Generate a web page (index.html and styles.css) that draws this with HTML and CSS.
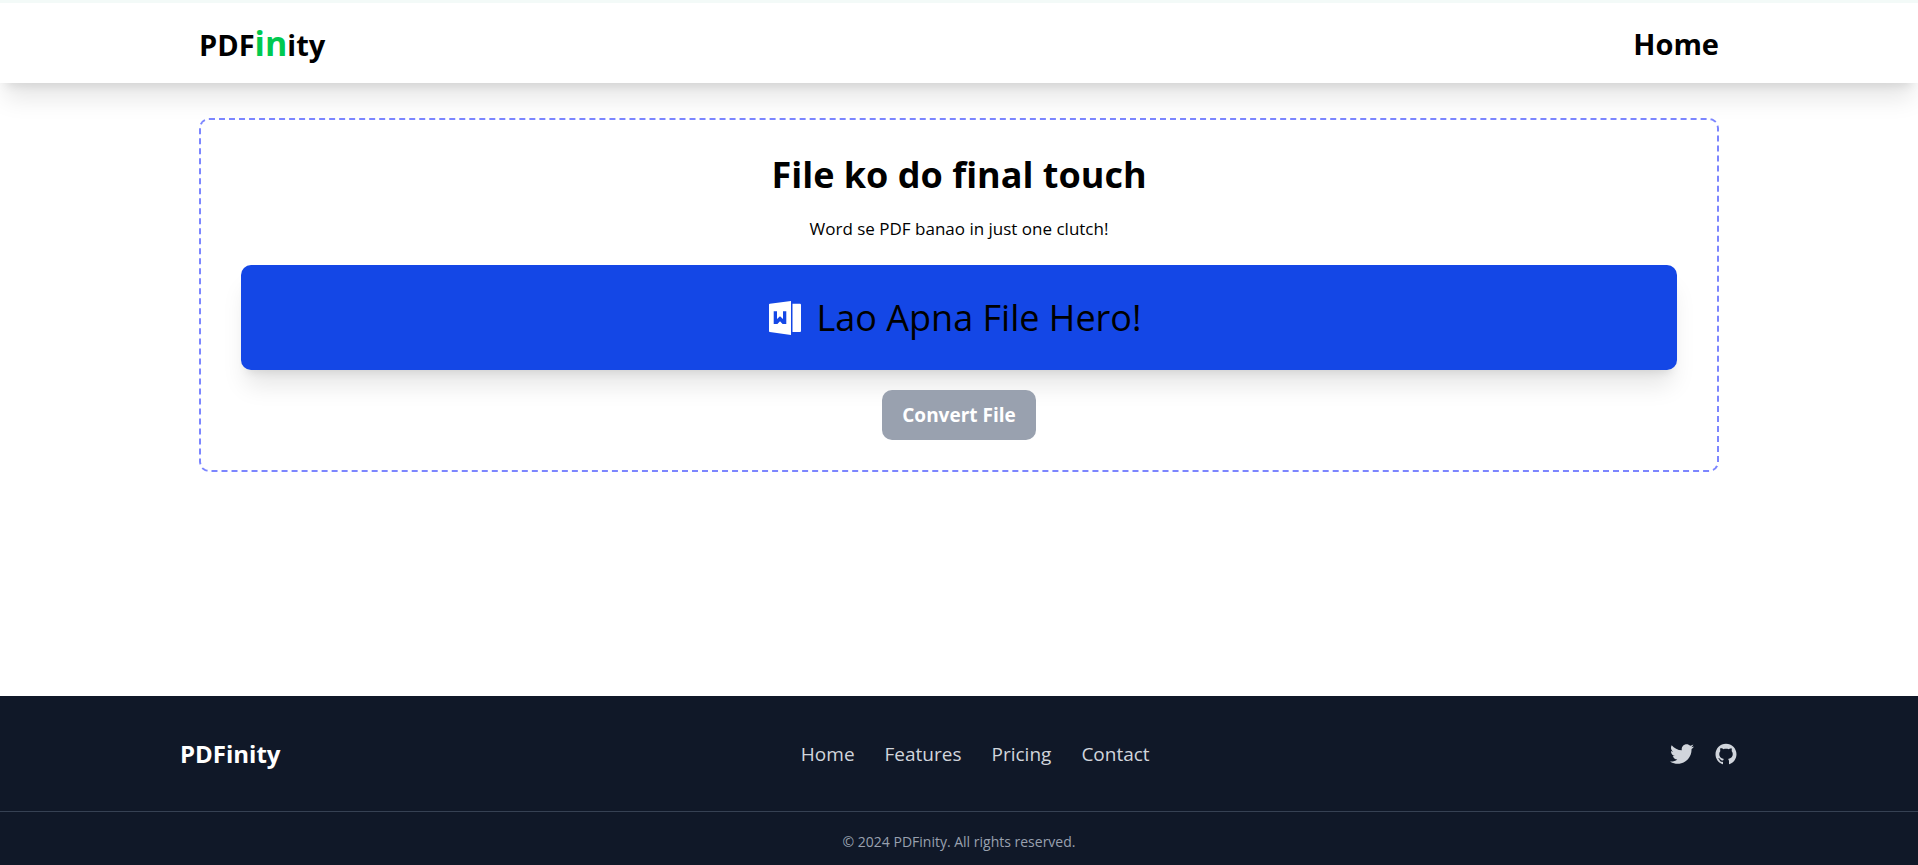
FILE: index.html
```html
<!DOCTYPE html>
<html lang="en">
<head>
<meta charset="utf-8">
<meta name="viewport" content="width=device-width, initial-scale=1">
<title>PDFinity</title>
<link rel="stylesheet" href="styles.css">
</head>
<body>
<header class="site-header">
  <div class="header-inner">
    <a class="brand" href="#">PDF<span class="brand-accent">in</span>ity</a>
    <nav><a class="header-link" href="#">Home</a></nav>
  </div>
</header>
<main class="main">
  <section class="card">
    <h1 class="title">File ko do final touch</h1>
    <p class="subtitle">Word se PDF banao in just one clutch!</p>
    <button class="picker" type="button">
      <svg class="picker-icon" viewBox="0 0 32 34" aria-hidden="true">
        <path fill="#fff" fill-rule="evenodd" d="M0 3.5 Q0 2.8 .8 2.7 L22 0 V34 L.8 31.1 Q0 31 0 30.3 Z M4.7 10.3 V23 H8.4 L11 20.3 L13.6 23 H17.3 V10.3 H14 V18 L11 15.3 L8 18 V10.3 Z"/>
        <path fill="#fff" d="M23.5 2.7 H31 Q32 2.7 32 3.7 V30 Q32 31 31 31 H23.5 Z"/>
      </svg>
      <span>Lao Apna File Hero!</span>
    </button>
    <button class="convert" type="button">Convert File</button>
  </section>
</main>
<footer class="site-footer">
  <div class="footer-inner">
    <h2 class="footer-brand">PDFinity</h2>
    <nav class="footer-nav">
      <a href="#">Home</a>
      <a href="#">Features</a>
      <a href="#">Pricing</a>
      <a href="#">Contact</a>
    </nav>
    <div class="social">
      <a href="#" aria-label="Twitter"><svg class="social-icon" viewBox="0 0 512 512"><path d="M459.37 151.716c.325 4.548.325 9.097.325 13.645 0 138.72-105.583 298.558-298.558 298.558-59.452 0-114.68-17.219-161.137-47.106 8.447.974 16.568 1.299 25.34 1.299 49.055 0 94.213-16.568 130.274-44.832-46.132-.975-84.792-31.188-98.112-72.772 6.498.974 12.995 1.624 19.818 1.624 9.421 0 18.843-1.3 27.614-3.573-48.081-9.747-84.143-51.98-84.143-102.985v-1.299c13.969 7.797 30.214 12.67 47.431 13.319-28.264-18.843-46.781-51.005-46.781-87.391 0-19.492 5.197-37.36 14.294-52.954 51.655 63.675 129.3 105.258 216.365 109.807-1.624-7.797-2.599-15.918-2.599-24.04 0-57.828 46.782-104.934 104.934-104.934 30.213 0 57.502 12.67 76.67 33.137 23.715-4.548 46.456-13.32 66.599-25.34-7.798 24.366-24.366 44.833-46.132 57.827 21.117-2.273 41.584-8.122 60.426-16.243-14.292 20.791-32.161 39.308-52.628 54.253z"/></svg></a>
      <a href="#" aria-label="GitHub"><svg class="social-icon" viewBox="0 0 1024 1024"><path d="M511.6 76.3C264.3 76.2 64 276.4 64 523.5 64 718.9 189.3 885 363.8 946c23.5 5.9 19.9-10.8 19.9-22.2v-77.5c-135.7 15.9-141.2-73.9-150.3-88.9C215 726 171.5 718 184.5 703c30.9-15.9 62.4 4 98.9 57.9 26.4 39.1 77.9 32.5 104 26 5.7-23.5 17.9-44.5 34.7-60.8-140.6-25.2-199.2-111-199.2-213 0-49.5 16.3-95 48.3-131.7-20.4-60.5 1.9-112.3 4.9-120 58.1-5.2 118.5 41.6 123.2 45.3 33-8.9 70.7-13.6 112.9-13.6 42.4 0 80.2 4.9 113.5 13.9 11.3-8.6 67.3-48.8 121.3-43.9 2.9 7.7 24.7 58.3 5.5 118 32.4 36.8 48.9 82.7 48.9 132.3 0 102.2-59 188.1-200 212.9a127.5 127.5 0 0138.1 91v112.5c.8 9 0 17.9 15 17.9 177.1-59.7 304.6-227 304.6-424.1 0-247.2-200.4-447.3-447.5-447.3z"/></svg></a>
    </div>
  </div>
  <p class="copyright">© 2024 PDFinity. All rights reserved.</p>
</footer>
</body>
</html>
```
FILE: styles.css
```css
* { box-sizing: border-box; margin: 0; padding: 0; }

body {
  min-height: 100vh;
  display: flex;
  flex-direction: column;
  border-top: 3px solid #f3faf8;
  background: #fff;
  color: #000;
  font-family: "Segoe UI", "Open Sans", "Noto Sans", sans-serif;
}

a { color: inherit; text-decoration: none; }
button { border: 0; font: inherit; cursor: pointer; }

.site-header {
  background: #fff;
  box-shadow: 0 20px 25px -5px rgba(0, 0, 0, .1), 0 8px 10px -6px rgba(0, 0, 0, .1);
}

.header-inner {
  max-width: 1520px;
  height: 80px;
  margin: 0 auto;
  padding-top: 2px;
  display: flex;
  align-items: center;
  justify-content: space-between;
}

.brand, .header-link { font-size: 29px; font-weight: 700; line-height: 40px; }
.brand-accent { color: #00c950; font-size: 34px; }

.main { flex: 1; padding: 35px 0; }

.card {
  max-width: 1520px;
  margin: 0 auto;
  padding: 30px 40px;
  border: 2px dashed #7c86ff;
  border-radius: 10px;
  display: flex;
  flex-direction: column;
  align-items: center;
}

.title { font-size: 36px; font-weight: 700; line-height: 50px; }
.subtitle { margin: 14px 0 21px; font-size: 17px; line-height: 30px; }

.picker {
  width: 100%;
  height: 105px;
  padding-right: 8px;
  display: flex;
  align-items: center;
  justify-content: center;
  gap: 16px;
  border-radius: 10px;
  background: #1447e6;
  box-shadow: 0 20px 25px -5px rgba(0, 0, 0, .1), 0 8px 10px -6px rgba(0, 0, 0, .1);
  color: #000;
  font-size: 36px;
}

.picker-icon { width: 32px; height: 34px; }

.convert {
  height: 50px;
  margin-top: 20px;
  padding: 0 20px;
  border-radius: 10px;
  background: #99a1af;
  color: #fff;
  font-size: 19px;
  font-weight: 700;
}

.site-footer { background: #101828; color: #d1d5dc; }

.footer-inner {
  max-width: 1558px;
  height: 115px;
  margin: 0 auto;
  display: flex;
  align-items: center;
  justify-content: space-between;
}

.footer-brand { color: #fff; font-size: 24px; font-weight: 700; }
.footer-nav { display: flex; gap: 30px; font-size: 19px; }
.social { display: flex; gap: 20px; }
.social-icon { display: block; width: 24px; height: 24px; fill: currentColor; }

.copyright {
  padding: 19px 0 13px;
  border-top: 1px solid #364153;
  color: #99a1af;
  font-size: 14px;
  line-height: 21px;
  text-align: center;
}
```
